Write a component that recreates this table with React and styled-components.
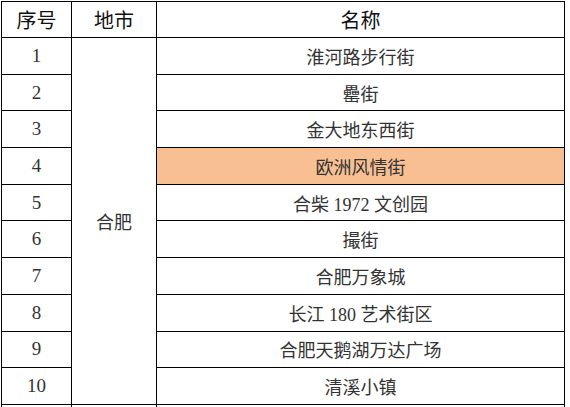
import styled, { createGlobalStyle } from 'styled-components';

const GlobalStyle = createGlobalStyle`
	html, body {
		margin: 0;
		padding: 0;
		background: #ffffff;
		overflow: hidden;
	}
`;

const Page = styled.div`
	padding: 1px 0 0 1px;
	width: 570px;
	height: 407px;
	box-sizing: border-box;
	overflow: hidden;
`;

const Table = styled.table`
	border-collapse: collapse;
	table-layout: fixed;
	width: 563px;
`;

const HeadCell = styled.th`
	height: 35px;
	padding: 0;
	border: 1px solid #000;
	font-family: 'Noto Sans CJK SC', sans-serif;
	font-weight: 400;
	font-size: 20px;
	color: #111;
	text-align: center;
	vertical-align: middle;
`;

const Cell = styled.td`
	height: 35.7px;
	padding: 0;
	border: 1px solid #000;
	font-family: 'Liberation Serif', 'Noto Sans CJK SC', serif;
	font-size: ${(p) => (p.$num ? '19px' : '18px')};
	color: #333;
	text-align: center;
	vertical-align: middle;
	background: ${(p) => (p.$hl ? '#f8c092' : 'transparent')};
`;

const rows = [
	'淮河路步行街',
	'罍街',
	'金大地东西街',
	'欧洲风情街',
	'合柴 1972 文创园',
	'撮街',
	'合肥万象城',
	'长江 180 艺术街区',
	'合肥天鹅湖万达广场',
	'清溪小镇',
];

const App = () => {
	return (
		<Page>
			<GlobalStyle />
			<Table>
				<colgroup>
					<col style={{ width: '70px' }} />
					<col style={{ width: '85px' }} />
					<col style={{ width: '408px' }} />
				</colgroup>
				<thead>
					<tr>
						<HeadCell>序号</HeadCell>
						<HeadCell>地市</HeadCell>
						<HeadCell>名称</HeadCell>
					</tr>
				</thead>
				<tbody>
					{rows.map((name, i) => (
						<tr key={name}>
							<Cell $num>{i + 1}</Cell>
							{i === 0 && <Cell rowSpan={10}>合肥</Cell>}
							<Cell $hl={i === 3}>{name}</Cell>
						</tr>
					))}
					<tr>
						<Cell />
						<Cell />
						<Cell />
					</tr>
				</tbody>
			</Table>
		</Page>
	);
};

export default App;
